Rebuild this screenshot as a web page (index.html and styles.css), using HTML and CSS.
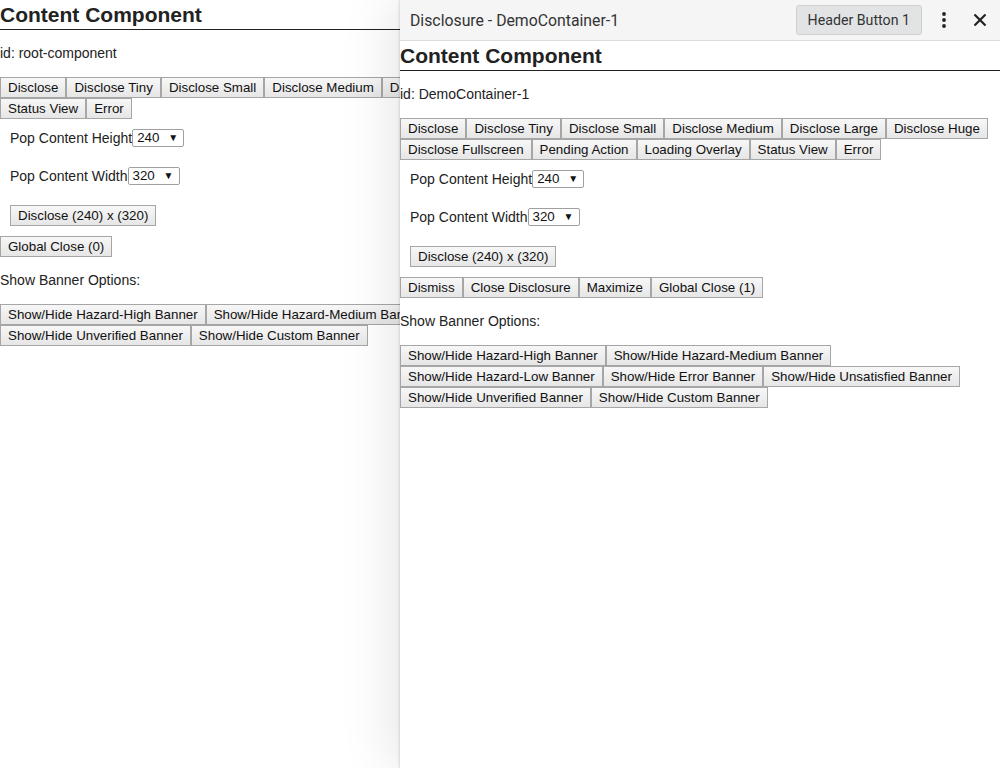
FILE: index.html
```html
<!DOCTYPE html>
<html>
<head>
<meta charset="utf-8">
<title>Disclosure Demo</title>
<link rel="stylesheet" href="styles.css">
</head>
<body>
<main class="root">
  <div class="content">
    <h2 class="title">Content Component</h2>
    <p class="text">id: root-component</p>
    <div class="btn-group">
      <button class="btn">Disclose</button><button class="btn">Disclose Tiny</button><button class="btn">Disclose Small</button><button class="btn">Disclose Medium</button><button class="btn">Disclose Large</button><button class="btn">Disclose Huge</button><button class="btn">Disclose Fullscreen</button><button class="btn">Pending Action</button><button class="btn">Loading Overlay</button><button class="btn">Status View</button><button class="btn">Error</button>
    </div>
    <div class="pop">
      <div class="pop-row"><span class="label">Pop Content Height</span><span class="select">240<span class="arrow">▼</span></span></div>
      <div class="pop-row"><span class="label">Pop Content Width</span><span class="select">320<span class="arrow">▼</span></span></div>
      <div class="pop-row"><button class="btn">Disclose (240) x (320)</button></div>
    </div>
    <div class="btn-group">
      <button class="btn">Global Close (0)</button>
    </div>
    <p class="text">Show Banner Options:</p>
    <div class="btn-group">
      <button class="btn">Show/Hide Hazard-High Banner</button><button class="btn">Show/Hide Hazard-Medium Banner</button><button class="btn">Show/Hide Hazard-Low Banner</button><button class="btn">Show/Hide Error Banner</button><button class="btn">Show/Hide Unsatisfied Banner</button><button class="btn">Show/Hide Unverified Banner</button><button class="btn">Show/Hide Custom Banner</button>
    </div>
  </div>
</main>

<aside class="disclosure">
  <header class="disc-header">
    <div class="disc-title">Disclosure - DemoContainer-1</div>
    <button class="header-btn">Header Button 1</button>
    <button class="icon-btn" aria-label="More">
      <svg width="24" height="24" viewBox="0 0 24 24"><circle cx="12" cy="6" r="1.9" fill="#222"/><circle cx="12" cy="12" r="1.9" fill="#222"/><circle cx="12" cy="18" r="1.9" fill="#222"/></svg>
    </button>
    <button class="icon-btn" aria-label="Close">
      <svg width="24" height="24" viewBox="0 0 24 24"><path d="M6.5 6.5 L17.5 17.5 M17.5 6.5 L6.5 17.5" stroke="#222" stroke-width="2.2" fill="none"/></svg>
    </button>
  </header>
  <div class="content">
    <h2 class="title">Content Component</h2>
    <p class="text">id: DemoContainer-1</p>
    <div class="btn-group">
      <button class="btn">Disclose</button><button class="btn">Disclose Tiny</button><button class="btn">Disclose Small</button><button class="btn">Disclose Medium</button><button class="btn">Disclose Large</button><button class="btn">Disclose Huge</button><button class="btn">Disclose Fullscreen</button><button class="btn">Pending Action</button><button class="btn">Loading Overlay</button><button class="btn">Status View</button><button class="btn">Error</button>
    </div>
    <div class="pop">
      <div class="pop-row"><span class="label">Pop Content Height</span><span class="select">240<span class="arrow">▼</span></span></div>
      <div class="pop-row"><span class="label">Pop Content Width</span><span class="select">320<span class="arrow">▼</span></span></div>
      <div class="pop-row"><button class="btn">Disclose (240) x (320)</button></div>
    </div>
    <div class="btn-group">
      <button class="btn">Dismiss</button><button class="btn">Close Disclosure</button><button class="btn">Maximize</button><button class="btn">Global Close (1)</button>
    </div>
    <p class="text">Show Banner Options:</p>
    <div class="btn-group">
      <button class="btn">Show/Hide Hazard-High Banner</button><button class="btn">Show/Hide Hazard-Medium Banner</button><button class="btn">Show/Hide Hazard-Low Banner</button><button class="btn">Show/Hide Error Banner</button><button class="btn">Show/Hide Unsatisfied Banner</button><button class="btn">Show/Hide Unverified Banner</button><button class="btn">Show/Hide Custom Banner</button>
    </div>
  </div>
</aside>
</body>
</html>
```

FILE: styles.css
```css
html, body {
  margin: 0;
  padding: 0;
  height: 100%;
  overflow: hidden;
  background: #fff;
}

body {
  font-family: "Liberation Sans", Arial, sans-serif;
  font-size: 14px;
  color: #222;
  position: relative;
}

.root {
  width: 1000px;
  height: 768px;
}

.title {
  margin: 0;
  font-size: 21px;
  font-weight: bold;
  line-height: 29px;
  color: #222;
  border-bottom: 1px solid #222;
}

.text {
  margin: 15px 0 16px;
  line-height: 16px;
}

.btn-group {
  display: flex;
  flex-wrap: wrap;
}

.btn {
  font-family: "Liberation Sans", Arial, sans-serif;
  font-size: 13.333px;
  line-height: 15px;
  height: 21px;
  padding: 2px 7px;
  margin: 0;
  border: 1px solid #a6a6a6;
  border-radius: 0;
  background: linear-gradient(#f7f7f7, #e6e6e6);
  color: #111;
  white-space: nowrap;
  box-sizing: border-box;
}

.pop {
  padding: 10px;
  display: flex;
  flex-direction: column;
  gap: 20px;
}

.pop-row {
  display: flex;
  align-items: center;
  height: 18px;
}

.pop-row:last-child {
  height: 21px;
}

.label {
  line-height: 16px;
}

.select {
  position: relative;
  display: inline-block;
  box-sizing: border-box;
  width: 52px;
  height: 18px;
  border: 1px solid #a0a0a0;
  border-radius: 2px;
  background: #fff;
  font-size: 13.333px;
  line-height: 16px;
  padding-left: 4px;
  color: #111;
}

.select .arrow {
  position: absolute;
  right: 5px;
  top: 0;
  font-size: 10px;
  line-height: 15px;
  color: #111;
}

.disclosure {
  position: absolute;
  top: 0;
  left: 400px;
  width: 600px;
  height: 768px;
  background: #fff;
  box-shadow: -1px 0 2px rgba(0, 0, 0, 0.12), -8px 0 50px rgba(0, 0, 0, 0.10);
}

.disc-header {
  display: flex;
  align-items: center;
  height: 40px;
  padding: 0 2px 0 10px;
  background: #f5f5f5;
  border-bottom: 1px solid #dcdcdc;
  font-family: Roboto, "Liberation Sans", sans-serif;
}

.disc-title {
  flex: 1;
  font-size: 15.8px;
  color: #333;
}

.header-btn {
  font-family: Roboto, "Liberation Sans", sans-serif;
  font-size: 14.2px;
  color: #333;
  height: 30px;
  padding: 0 11px;
  background: #e2e3e5;
  border: 1px solid #cfcfcf;
  border-radius: 3px;
  margin-right: 4px;
}

.icon-btn {
  width: 36px;
  height: 36px;
  padding: 0;
  border: none;
  background: transparent;
  display: flex;
  align-items: center;
  justify-content: center;
}
```
